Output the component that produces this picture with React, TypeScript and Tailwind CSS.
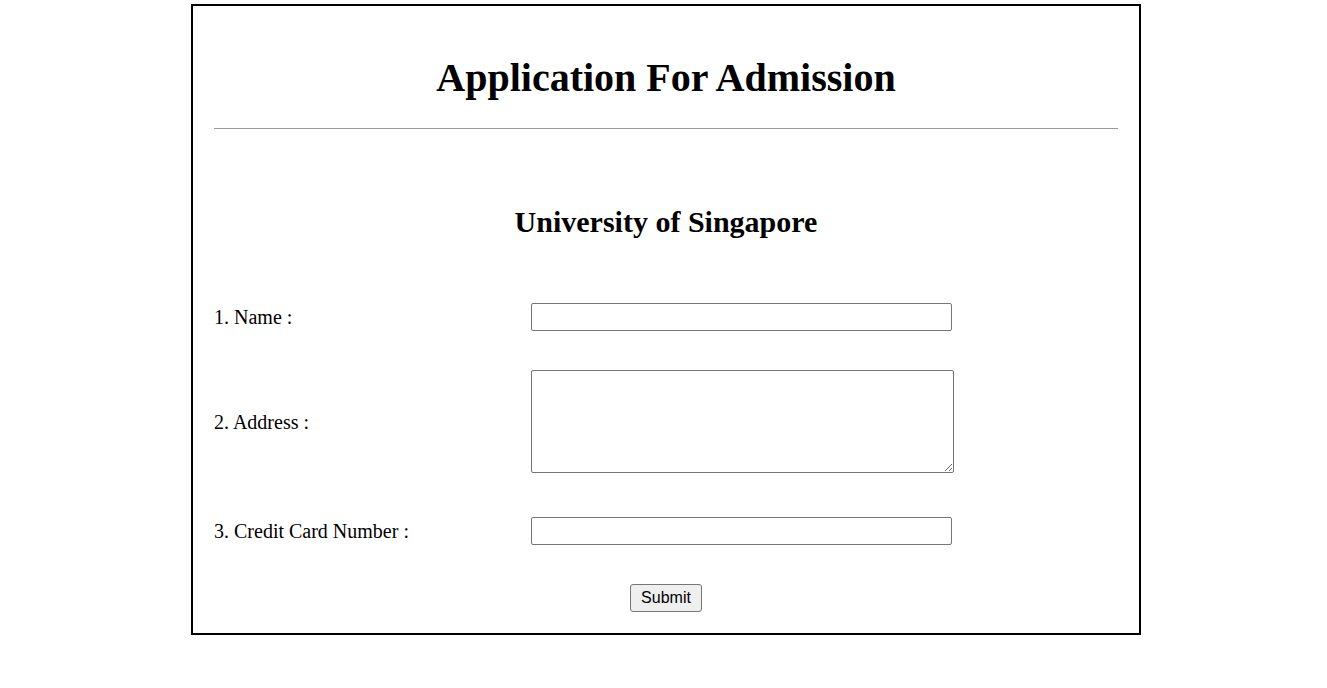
import React from 'react';

const serif = "font-['Liberation_Serif','Times_New_Roman',serif]";

const Row: React.FC<{ label: string; children: React.ReactNode; className?: string }> = ({ label, children, className }) => (
  <div className={`flex items-center ${className ?? ''}`}>
    <div className="w-[317px] shrink-0 text-[20px] leading-[24px] text-black">{label}</div>
    {children}
  </div>
);

export default function App() {
  return (
    <div className={`w-full min-h-[688px] bg-white ${serif}`}>
      <div className="ml-[191px] mt-[4px] w-[950px] h-[631px] border-2 border-black px-[21px] pt-[48px] flex flex-col">
        <h1 className="text-center text-[40px] leading-[48px] font-bold text-black">Application For Admission</h1>
        <hr className="mt-[26px] border-0 border-t border-[#9a9a9a]" />

        <h2 className="mt-[75px] text-center text-[30px] leading-[36px] font-bold text-black">University of Singapore</h2>

        <form className="mt-[63px] flex flex-col" onSubmit={(e) => e.preventDefault()}>
          <Row label="1. Name :">
            <input type="text" className="w-[421px] h-[28px] border border-[#767676] rounded-[2px] bg-white px-1 outline-none" />
          </Row>

          <Row label="2. Address :" className="mt-[39px]">
            <textarea className="w-[423px] h-[103px] border border-[#767676] rounded-[2px] bg-white p-1 outline-none resize" />
          </Row>

          <Row label="3. Credit Card Number :" className="mt-[44px]">
            <input type="text" className="w-[421px] h-[28px] border border-[#767676] rounded-[2px] bg-white px-1 outline-none" />
          </Row>

          <div className="mt-[39px] flex justify-center">
            <button
              type="submit"
              className="w-[72px] h-[28px] border border-[#767676] rounded-[3px] bg-[#efefef] font-['Liberation_Sans',Arial,sans-serif] text-[16px] leading-[20px] text-black"
            >
              Submit
            </button>
          </div>
        </form>
      </div>
    </div>
  );
}
